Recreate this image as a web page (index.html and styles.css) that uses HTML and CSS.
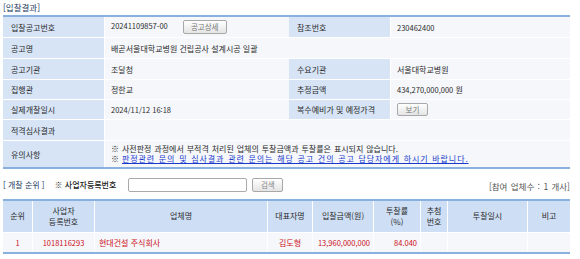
FILE: index.html
```html
<!DOCTYPE html>
<html lang="ko">
<head>
<meta charset="utf-8">
<link rel="stylesheet" href="styles.css">
</head>
<body>
<div class="page">
  <div class="title">[입찰결과]</div>
  <table class="info">
    <colgroup><col class="c-l"><col class="c-v"><col class="c-l2"><col class="c-v2"></colgroup>
    <tr class="r1">
      <th>입찰공고번호</th>
      <td><span class="num">20241109857-00</span><button class="btn btn-detail">공고상세</button></td>
      <th>참조번호</th>
      <td class="num">230462400</td>
    </tr>
    <tr class="r1">
      <th>공고명</th>
      <td colspan="3">배곧서울대학교병원 건립공사 설계시공 일괄</td>
    </tr>
    <tr class="r1">
      <th>공고기관</th>
      <td>조달청</td>
      <th>수요기관</th>
      <td>서울대학교병원</td>
    </tr>
    <tr class="r2">
      <th>집행관</th>
      <td>정한교</td>
      <th>추정금액</th>
      <td><span class="num">434,270,000,000</span> 원</td>
    </tr>
    <tr class="r2">
      <th>실제개찰일시</th>
      <td class="num">2024/11/12 16:18</td>
      <th>복수예비가 및 예정가격</th>
      <td><button class="btn btn-view">보기</button></td>
    </tr>
    <tr class="r1">
      <th>적격심사결과</th>
      <td colspan="3"></td>
    </tr>
    <tr class="r3">
      <th>유의사항</th>
      <td colspan="3" class="notes">
        <div>※ 사전판정 과정에서 부적격 처리된 업체의 투찰금액과 투찰률은 표시되지 않습니다.</div>
        <div>※ <a class="link" href="#">판정관련 문의 및 심사결과 관련 문의는 해당 공고 건의 공고 담당자에게 하시기 바랍니다.</a></div>
      </td>
    </tr>
  </table>

  <div class="toolbar">
    <span class="sub-title">[ 개찰 순위 ]</span>
    <span class="search-label">※ 사업자등록번호</span>
    <input class="search-input" type="text">
    <button class="btn btn-search">검색</button>
    <span class="count">[참여 업체수 : 1 개사]</span>
  </div>

  <table class="rank">
    <colgroup>
      <col class="k-rank"><col class="k-biz"><col class="k-name"><col class="k-ceo"><col class="k-amt"><col class="k-rate"><col class="k-draw"><col class="k-time"><col class="k-note">
    </colgroup>
    <tr class="head">
      <th>순위</th>
      <th>사업자<br>등록번호</th>
      <th>업체명</th>
      <th>대표자명</th>
      <th>입찰금액(원)</th>
      <th>투찰률<br>(%)</th>
      <th>추첨<br>번호</th>
      <th>투찰일시</th>
      <th>비고</th>
    </tr>
    <tr class="data">
      <td class="center num">1</td>
      <td class="center num">1018116293</td>
      <td class="left">현대건설 주식회사</td>
      <td class="center">김도형</td>
      <td class="right num">13,960,000,000</td>
      <td class="right num">84.040</td>
      <td></td>
      <td></td>
      <td></td>
    </tr>
  </table>
</div>
</body>
</html>
```

FILE: styles.css
```css
html, body {
  margin: 0;
  padding: 0;
  background: #fff;
}
body {
  font-family: "Noto Sans CJK KR", "Noto Sans", sans-serif;
  font-size: 8px;
  color: #2b2b2b;
}
.page {
  width: 567px;
  padding-left: 3px;
}
.title {
  height: 15px;
  line-height: 15px;
  font-size: 8.5px;
  color: #233a5c;
}
table {
  border-collapse: separate;
  border-spacing: 0;
  table-layout: fixed;
  width: 567px;
}
.info {
  border-top: 2px solid #8ab0df;
  border-bottom: 2px solid #8ab0df;
}
.c-l { width: 101px; }
.c-v { width: 185px; }
.c-l2 { width: 101px; }
.c-v2 { width: 180px; }
.info th {
  background: #d6e4f6;
  text-align: left;
  font-weight: normal;
  padding: 0 0 0 8px;
  border-bottom: 1px solid #fff;
  color: #2b2b2b;
  white-space: nowrap;
}
.info td {
  background: #f5f7fb;
  padding: 0 0 0 6px;
  border-bottom: 1px solid #fff;
  border-left: 1px solid #fff;
  white-space: nowrap;
}
.info tr:last-child th,
.info tr:last-child td { border-bottom: 0; }
.info .r1 th, .info .r1 td { height: 20px; }
.info .r2 th, .info .r2 td { height: 19px; }
.info .r3 th, .info .r3 td { height: 26px; }
.num {
  font-size: 7.5px;
}
.btn {
  font-family: inherit;
  font-size: 7.5px;
  color: #777;
  background: linear-gradient(#ffffff, #e4e4e4);
  border: 1px solid #a8a8a8;
  border-radius: 2px;
  padding: 0;
  height: 14px;
  line-height: 12px;
  vertical-align: middle;
}
.btn-detail {
  width: 44px;
  margin-left: 15px;
}
.btn-view {
  width: 31px;
  height: 13px;
}
.notes {
  line-height: 10.5px;
  word-spacing: 0.7px;
}
.link {
  color: #1a3acb;
  text-decoration: underline;
  letter-spacing: 0.9px;
}
.toolbar {
  display: flex;
  align-items: center;
  height: 29px;
  padding-top: 1px;
  white-space: nowrap;
}
.sub-title {
  color: #233a5c;
  margin-right: 10px;
}
.search-label {
  color: #222;
  font-weight: 500;
  margin-right: 12px;
}
.search-input {
  width: 119px;
  height: 14px;
  box-sizing: border-box;
  border: 1px solid #a9a9a9;
  border-radius: 2px;
  padding: 0;
  margin: 0 5px 0 0;
}
.btn-search {
  width: 31px;
  height: 14px;
  color: #888;
}
.count {
  margin-left: auto;
  color: #555;
  font-size: 8.5px;
  word-spacing: 1px;
  padding-top: 2px;
}
.rank {
  border-top: 2px solid #8ab0df;
  border-bottom: 2px solid #8ab0df;
}
.k-rank { width: 29px; }
.k-biz { width: 62px; }
.k-name { width: 173px; }
.k-ceo { width: 45px; }
.k-amt { width: 61px; }
.k-rate { width: 47px; }
.k-draw { width: 27px; }
.k-time { width: 80px; }
.k-note { width: 43px; }
.rank th {
  background: #cedff5;
  font-weight: normal;
  color: #2b2b2b;
  height: 31px;
  padding: 0;
  line-height: 10.5px;
  border-left: 1px solid #fff;
  border-bottom: 1px solid #fff;
  text-align: center;
}
.rank td {
  background: #f5f7fb;
  height: 19px;
  padding: 0;
  border-left: 1px solid #fff;
  color: #cc1020;
  white-space: nowrap;
}
.rank th:first-child, .rank td:first-child { border-left: 0; }
.center { text-align: center; }
.left { text-align: left; padding-left: 4px !important; }
.right { text-align: right; padding-right: 3px !important; }
```
